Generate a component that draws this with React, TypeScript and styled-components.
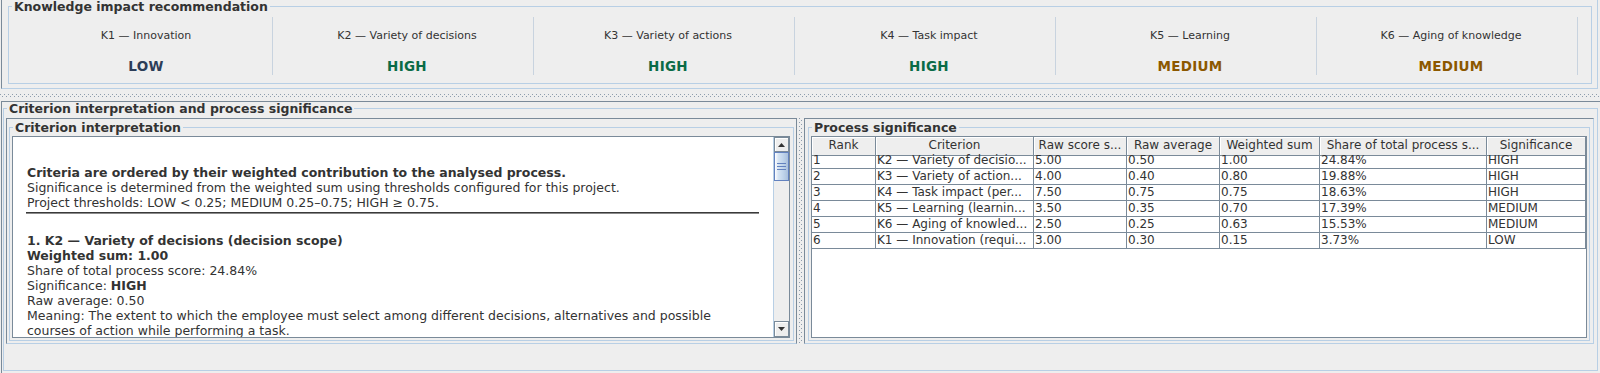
import styled, { createGlobalStyle } from 'styled-components';

type Level = 'LOW' | 'MEDIUM' | 'HIGH';

const GlobalStyle = createGlobalStyle`
  html, body {
    margin: 0;
    padding: 0;
  }
  body {
    background: #eeeeee;
    font-family: "DejaVu Sans", "Liberation Sans", sans-serif;
    color: #333333;
  }
`;

const Frame = styled.div`
  width: 1600px;
  height: 373px;
  overflow: hidden;
  background: #eeeeee;
  display: flex;
  flex-direction: column;
`;

const TopPane = styled.div`
  box-sizing: border-box;
  height: 89px;
  margin: 0 2px 0 1px;
  padding: 0 5px 4px 6px;
  border-left: 1px solid #7a8a99;
  border-right: 1px solid #b8cfe5;
  border-bottom: 1px solid #b8cfe5;
  display: flex;
`;

const TitledBox = styled.fieldset`
  box-sizing: border-box;
  margin: 0;
  padding: 0;
  min-width: 0;
  min-inline-size: 0;
  border: 1px solid #b8cfe5;
  flex: 1;
  display: flex;
  flex-direction: column;
`;

const Title = styled.legend`
  margin-left: 3px;
  padding: 0 2px;
  font-size: 12.5px;
  font-weight: bold;
  line-height: 13px;
  color: #333333;
  white-space: nowrap;
`;

const Columns = styled.div`
  display: grid;
  grid-template-columns: repeat(6, 261px);
  height: 58px;
  margin: 4px 0 0 3px;
`;

const Cell = styled.div`
  border-right: 1px solid #c8d3df;
  display: flex;
  flex-direction: column;
  align-items: center;
  padding: 12px 0 0 8px;
`;

const CellLabel = styled.div`
  font-size: 11px;
  line-height: 14px;
  color: #333333;
  white-space: nowrap;
`;

const levelColor: Record<Level, string> = {
  LOW: '#2c3d58',
  HIGH: '#0a6b47',
  MEDIUM: '#8c5800',
};

const LevelText = styled.div<{ $level: Level }>`
  margin-top: 15px;
  font-size: 13.5px;
  font-weight: bold;
  line-height: 16px;
  letter-spacing: 0.3px;
  color: ${(p) => levelColor[p.$level]};
`;

const HDivider = styled.div`
  height: 12px;
  flex: none;
  background-image: linear-gradient(90deg, #8e9dad 1px, transparent 1px),
    linear-gradient(90deg, #8e9dad 1px, transparent 1px);
  background-size: 4px 1px, 4px 1px;
  background-position: 0 5px, 2px 7px;
  background-repeat: repeat-x;
`;

const BottomPane = styled.div`
  box-sizing: border-box;
  flex: 1;
  margin-left: 1px;
  padding: 0 2px 2px 1px;
  border-top: 1px solid #7a8a99;
  border-left: 1px solid #7a8a99;
  display: flex;
`;

const SplitH = styled.div`
  display: flex;
  height: 226px;
  margin: 3px 3px 0 2px;
`;

const SideComp = styled.div<{ $w: number; $last?: boolean }>`
  box-sizing: border-box;
  width: ${(p) => p.$w}px;
  display: flex;
  padding: ${(p) => (p.$last ? '2px 3px 2px 3px' : '2px 2px 2px 2px')};
  border-top: 1px solid #7a8a99;
  border-left: 1px solid #7a8a99;
  border-right: 1px solid ${(p) => (p.$last ? '#b8cfe5' : '#7a8a99')};
  border-bottom: 1px solid #b8cfe5;
`;

const VDivider = styled.div`
  width: 7px;
  flex: none;
  background-image: linear-gradient(180deg, #8e9dad 1px, transparent 1px),
    linear-gradient(180deg, #8e9dad 1px, transparent 1px);
  background-size: 1px 4px, 1px 4px;
  background-position: 2px 0, 4px 2px;
  background-repeat: repeat-y;
`;

const ScrollPane = styled.div<{ $inset: string }>`
  flex: 1;
  min-height: 0;
  display: flex;
  margin: ${(p) => p.$inset};
  border: 1px solid #7a8a99;
  background: #ffffff;
  overflow: hidden;
`;

const Viewport = styled.div`
  flex: 1;
  overflow: hidden;
  padding: 27.5px 14px 0 14px;
  font-size: 12.5px;
  line-height: 15px;
  color: #333333;
  white-space: nowrap;
`;

const Strong = styled.div`
  font-weight: bold;
`;

const Line = styled.div``;

const Rule = styled.div`
  margin: 2.5px 0 19px -1px;
  height: 0;
  border-top: 1px solid #3a3a3a;
  border-bottom: 1px solid #8a8a8a;
`;

const ScrollBar = styled.div`
  width: 16px;
  flex: none;
  display: flex;
  flex-direction: column;
  background: #eeeeee;
  border-left: 1px solid #b8cfe5;
  box-sizing: border-box;
`;

const ArrowButton = styled.div<{ $h: number }>`
  box-sizing: border-box;
  height: ${(p) => p.$h}px;
  flex: none;
  display: flex;
  align-items: center;
  justify-content: center;
  background: #eeeeee;
  border: 1px solid #7a8a99;
  box-shadow: inset 1px 1px 0 #ffffff;
`;

const Thumb = styled.div`
  box-sizing: border-box;
  height: 29px;
  flex: none;
  display: flex;
  flex-direction: column;
  justify-content: center;
  align-items: center;
  gap: 2px;
  border: 1px solid #6382bf;
  background: linear-gradient(90deg, #ffffff 0%, #d6e4f3 25%, #c2d6ec 60%, #a9c0dc 100%);
`;

const Grip = styled.div`
  width: 9px;
  height: 1px;
  background: #6382bf;
`;

const Track = styled.div`
  flex: 1;
`;

const TableGrid = styled.div`
  display: grid;
  grid-template-columns: 64px 158px 93px 93px 100px 167px 99px;
  grid-auto-rows: 16px;
  align-content: start;
  width: 774px;
  font-size: 12px;
  line-height: 15px;
  color: #333333;
`;

const HeadCell = styled.div`
  box-sizing: border-box;
  height: 19px;
  padding-top: 1px;
  text-align: center;
  background: #eeeeee;
  border-right: 1px solid #7a8a99;
  border-bottom: 1px solid #7a8a99;
  box-shadow: inset 1px 1px 0 #ffffff;
  white-space: nowrap;
  overflow: hidden;
`;

const BodyCell = styled.div`
  box-sizing: border-box;
  padding-left: 1px;
  border-right: 1px solid #7a8a99;
  border-bottom: 1px solid #7a8a99;
  white-space: nowrap;
  overflow: hidden;
`;

const TableRow = styled.div`
  display: contents;
`;

function UpArrow() {
  return (
    <svg width="7" height="4" viewBox="0 0 7 4">
      <path d="M3.5 0 L7 4 L0 4 Z" fill="#333333" />
    </svg>
  );
}

function DownArrow() {
  return (
    <svg width="7" height="4" viewBox="0 0 7 4">
      <path d="M0 0 L7 0 L3.5 4 Z" fill="#333333" />
    </svg>
  );
}

const criteria: { label: string; level: Level }[] = [
  { label: 'K1 — Innovation', level: 'LOW' },
  { label: 'K2 — Variety of decisions', level: 'HIGH' },
  { label: 'K3 — Variety of actions', level: 'HIGH' },
  { label: 'K4 — Task impact', level: 'HIGH' },
  { label: 'K5 — Learning', level: 'MEDIUM' },
  { label: 'K6 — Aging of knowledge', level: 'MEDIUM' },
];

const headers = [
  'Rank',
  'Criterion',
  'Raw score s...',
  'Raw average',
  'Weighted sum',
  'Share of total process s...',
  'Significance',
];

const rows = [
  ['1', 'K2 — Variety of decisio...', '5.00', '0.50', '1.00', '24.84%', 'HIGH'],
  ['2', 'K3 — Variety of action...', '4.00', '0.40', '0.80', '19.88%', 'HIGH'],
  ['3', 'K4 — Task impact (per...', '7.50', '0.75', '0.75', '18.63%', 'HIGH'],
  ['4', 'K5 — Learning (learnin...', '3.50', '0.35', '0.70', '17.39%', 'MEDIUM'],
  ['5', 'K6 — Aging of knowled...', '2.50', '0.25', '0.63', '15.53%', 'MEDIUM'],
  ['6', 'K1 — Innovation (requi...', '3.00', '0.30', '0.15', '3.73%', 'LOW'],
];

export default function App() {
  return (
    <Frame>
      <GlobalStyle />
      <TopPane>
        <TitledBox>
          <Title>Knowledge impact recommendation</Title>
          <Columns>
            {criteria.map((c) => (
              <Cell key={c.label}>
                <CellLabel>{c.label}</CellLabel>
                <LevelText $level={c.level}>{c.level}</LevelText>
              </Cell>
            ))}
          </Columns>
        </TitledBox>
      </TopPane>

      <HDivider />

      <BottomPane>
        <TitledBox>
          <Title>Criterion interpretation and process significance</Title>
          <SplitH>
            <SideComp $w={791}>
              <TitledBox>
                <Title>Criterion interpretation</Title>
                <ScrollPane $inset="2px 3px 2px 2px">
                  <Viewport>
                    <Strong>Criteria are ordered by their weighted contribution to the analysed process.</Strong>
                    <Line>Significance is determined from the weighted sum using thresholds configured for this project.</Line>
                    <Line>Project thresholds: LOW &lt; 0.25; MEDIUM 0.25–0.75; HIGH ≥ 0.75.</Line>
                    <Rule />
                    <Strong>1. K2 — Variety of decisions (decision scope)</Strong>
                    <Strong>Weighted sum: 1.00</Strong>
                    <Line>Share of total process score: 24.84%</Line>
                    <Line>
                      Significance: <b>HIGH</b>
                    </Line>
                    <Line>Raw average: 0.50</Line>
                    <Line>
                      Meaning: The extent to which the employee must select among different decisions, alternatives and possible
                    </Line>
                    <Line>courses of action while performing a task.</Line>
                  </Viewport>
                  <ScrollBar>
                    <ArrowButton $h={15}>
                      <UpArrow />
                    </ArrowButton>
                    <Thumb>
                      <Grip />
                      <Grip />
                      <Grip />
                    </Thumb>
                    <Track />
                    <ArrowButton $h={16}>
                      <DownArrow />
                    </ArrowButton>
                  </ScrollBar>
                </ScrollPane>
              </TitledBox>
            </SideComp>

            <VDivider />

            <SideComp $w={790} $last>
              <TitledBox>
                <Title>Process significance</Title>
                <ScrollPane $inset="2px 2px 2px 2px">
                  <TableGrid>
                    <TableRow>
                      {headers.map((h) => (
                        <HeadCell key={h}>{h}</HeadCell>
                      ))}
                    </TableRow>
                    {rows.map((r) => (
                      <TableRow key={r[0]}>
                        {r.map((v, i) => (
                          <BodyCell key={i}>{v}</BodyCell>
                        ))}
                      </TableRow>
                    ))}
                  </TableGrid>
                </ScrollPane>
              </TitledBox>
            </SideComp>
          </SplitH>
        </TitledBox>
      </BottomPane>
    </Frame>
  );
}
